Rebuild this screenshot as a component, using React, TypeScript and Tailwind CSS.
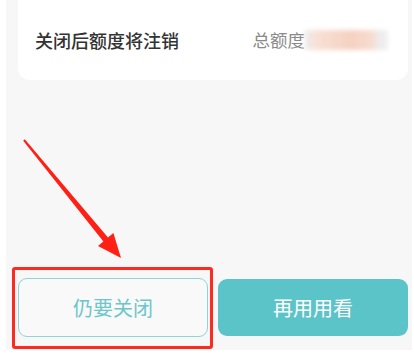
import React from "react";

export default function App() {
  const cjk = { fontFamily: '"Noto Sans CJK SC", "Noto Sans", sans-serif' };
  return (
    <div className="relative w-[414px] h-[358px] bg-white overflow-hidden" style={cjk}>
      <div className="ml-[6px] w-[406px] h-[350px] bg-[#f7f7f7] flex flex-col">
        <div className="ml-[12px] w-[390px] h-[80px] bg-white rounded-b-[12px] flex items-center justify-between pl-[17px] pr-[20px]">
          <span className="text-[18px] font-medium text-[#333333] leading-none">关闭后额度将注销</span>
          <div className="flex items-center">
            <span className="text-[17.5px] text-[#8a8a8a] leading-none">总额度</span>
            <div className="w-[83px] h-[20px] blur-[2px] bg-[linear-gradient(90deg,#ededed_0%,#f8e0d5_15%,#f5d2c2_55%,#f7dcd0_80%,#ededed_90%,#f0f0f0_100%)]" />
          </div>
        </div>
        <div className="mt-[198px] ml-[12px] flex gap-[10px]">
          <button className="w-[190px] h-[59px] rounded-[9px] border border-[#8fd4d7] bg-[#f9f9f9] text-[20px] text-[#6cc6ca] flex items-center justify-center">
            仍要关闭
          </button>
          <button className="w-[190px] h-[57px] mt-[1px] rounded-[9px] bg-[#5bc4c9] text-[20px] text-white flex items-center justify-center">
            再用用看
          </button>
        </div>
      </div>
      <div className="absolute left-[12px] top-[267px] w-[201px] h-[82px] border-[3px] border-[#ff2a1f] rounded-[3px] pointer-events-none" />
      <svg className="absolute left-0 top-0 pointer-events-none" width="414" height="358">
        <polygon
          points="24.77,139.36 108,237.6 113.4,233.1 121,258 98,245.9 103.4,241.4 23.23,140.64"
          fill="#ff1f14"
        />
      </svg>
    </div>
  );
}
